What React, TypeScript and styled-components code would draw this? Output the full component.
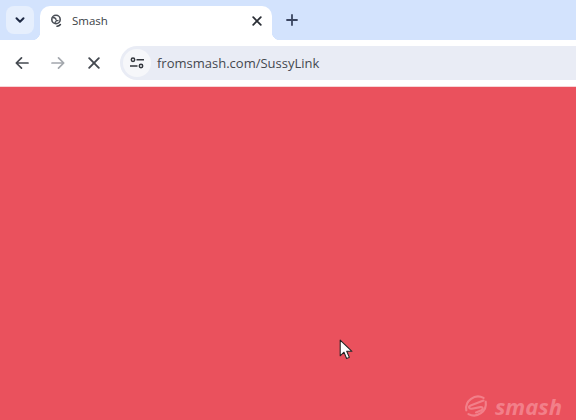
import React from "react";
import styled, { createGlobalStyle } from "styled-components";

const Global = createGlobalStyle`
  html, body { margin: 0; padding: 0; width: 576px; height: 420px; overflow: hidden; }
  #root { width: 576px; height: 420px; }
`;

const Page = styled.div`
  width: 576px;
  height: 420px;
  display: flex;
  flex-direction: column;
  font-family: "Open Sans", "Noto Sans", sans-serif;
  background: #ea515d;
`;

const TabStrip = styled.div`
  height: 40px;
  flex: none;
  background: #d3e3fd;
  display: flex;
  align-items: flex-start;
  padding: 6px 0 0 6px;
  box-sizing: border-box;
`;

const TabSearch = styled.div`
  width: 28px;
  height: 28px;
  border-radius: 8px;
  background: #e6effd;
  display: flex;
  align-items: center;
  justify-content: center;
  color: #1f2a44;
  flex: none;
`;

const Tab = styled.div`
  position: relative;
  width: 232px;
  height: 34px;
  margin-left: 6px;
  background: #fff;
  border-radius: 10px 10px 0 0;
  display: flex;
  align-items: center;
  padding: 0 9px 5px 9px;
  box-sizing: border-box;
  flex: none;
  &::before, &::after {
    content: "";
    position: absolute;
    bottom: 0;
    width: 8px;
    height: 8px;
  }
  &::before { left: -8px; background: radial-gradient(circle at 0 0, transparent 8px, #fff 8.5px); }
  &::after { right: -8px; background: radial-gradient(circle at 100% 0, transparent 8px, #fff 8.5px); }
`;

const TabTitle = styled.span`
  margin-left: 7px;
  font-size: 11.5px;
  color: #3a3e45;
  flex: 1;
`;

const NewTab = styled.div`
  margin-left: 6px;
  width: 28px;
  height: 28px;
  display: flex;
  align-items: center;
  justify-content: center;
  color: #3a4560;
`;

const Toolbar = styled.div`
  height: 47px;
  flex: none;
  background: #fff;
  display: flex;
  align-items: flex-start;
  padding: 6px 0 0 0;
  box-sizing: border-box;
  border-bottom: 1px solid #f7d5d8;
`;

const NavButton = styled.div<{ $muted?: boolean }>`
  width: 36px;
  height: 33px;
  display: flex;
  align-items: center;
  justify-content: center;
  flex: none;
  color: ${(p) => (p.$muted ? "#a3a7ad" : "#444950")};
`;

const NavGroup = styled.div`
  display: flex;
  padding-left: 4px;
`;

const Omnibox = styled.div`
  flex: 1;
  height: 34px;
  margin-left: 8px;
  background: #e9ecf5;
  border-radius: 17px 0 0 17px;
  display: flex;
  align-items: center;
  padding-left: 3px;
`;

const SiteInfo = styled.div`
  width: 28px;
  height: 28px;
  border-radius: 50%;
  background: #f6f7fa;
  display: flex;
  align-items: center;
  justify-content: center;
  color: #33373d;
  flex: none;
`;

const Url = styled.span`
  margin: 0 0 1px 6px;
  font-size: 13px;
  color: #44484f;
`;

const Content = styled.div`
  position: relative;
  flex: 1;
`;

const Cursor = styled.svg`
  position: absolute;
  left: 339px;
  top: 252px;
`;

const Watermark = styled.div`
  position: absolute;
  right: 14px;
  bottom: 0;
  display: flex;
  align-items: center;
  gap: 5px;
  color: #f27f89;
`;

const WatermarkText = styled.span`
  font-weight: 700;
  font-style: italic;
  font-size: 22px;
  line-height: 26px;
`;

export default function App() {
  return (
    <Page>
      <Global />
      <TabStrip>
        <TabSearch>
          <svg width="12" height="12" viewBox="0 0 12 12" fill="none" stroke="currentColor" strokeWidth="2" strokeLinecap="round" strokeLinejoin="round">
            <path d="M2.5 4.2 6 7.7l3.5-3.5" />
          </svg>
        </TabSearch>
        <Tab>
          <svg width="16" height="16" viewBox="0 0 16 16" fill="none">
            <circle cx="7" cy="6.5" r="4.2" stroke="#4a4f57" strokeWidth="1.6" />
            <path d="M4 4.5c2 .2 3 1 3 2.2s1.5 1 2.5.6M6 10c0-1 .5-1.5 1.5-1.5" stroke="#4a4f57" strokeWidth="1.3" />
            <path d="M8 13.2c1.4 0 2.6-.6 3.4-1.6" stroke="#3a3f47" strokeWidth="1.6" strokeLinecap="round" />
          </svg>
          <TabTitle>Smash</TabTitle>
          <svg width="12" height="12" viewBox="0 0 12 12" fill="none" stroke="#2a2e35" strokeWidth="1.8" strokeLinecap="round">
            <path d="M2.2 2.2l7.6 7.6M9.8 2.2l-7.6 7.6" />
          </svg>
        </Tab>
        <NewTab>
          <svg width="12" height="12" viewBox="0 0 12 12" fill="none" stroke="currentColor" strokeWidth="1.8" strokeLinecap="round">
            <path d="M6 1v10M1 6h10" />
          </svg>
        </NewTab>
      </TabStrip>
      <Toolbar>
        <NavGroup>
          <NavButton>
            <svg width="14" height="14" viewBox="0 0 14 14" fill="none" stroke="currentColor" strokeWidth="1.7" strokeLinecap="round" strokeLinejoin="round">
              <path d="M13 7H1.5M6.5 1.8 1.3 7l5.2 5.2" />
            </svg>
          </NavButton>
          <NavButton $muted>
            <svg width="14" height="14" viewBox="0 0 14 14" fill="none" stroke="currentColor" strokeWidth="1.7" strokeLinecap="round" strokeLinejoin="round">
              <path d="M1 7h11.5M7.5 1.8 12.7 7l-5.2 5.2" />
            </svg>
          </NavButton>
          <NavButton>
            <svg width="12" height="12" viewBox="0 0 12 12" fill="none" stroke="currentColor" strokeWidth="1.9" strokeLinecap="round">
              <path d="M1.2 1.2l9.6 9.6M10.8 1.2l-9.6 9.6" />
            </svg>
          </NavButton>
        </NavGroup>
        <Omnibox>
          <SiteInfo>
            <svg width="14" height="12" viewBox="0 0 14 12" fill="none" stroke="currentColor" strokeWidth="1.5">
              <circle cx="3" cy="2.8" r="1.7" />
              <path d="M6.5 2.8H14M0 9h7.5" />
              <circle cx="11" cy="9" r="1.7" />
            </svg>
          </SiteInfo>
          <Url>fromsmash.com/SussyLink</Url>
        </Omnibox>
      </Toolbar>
      <Content>
        <Cursor width="15" height="21" viewBox="0 0 14 20">
          <path d="M1 1v15l3.6-3.4 2.5 6 2.6-1.1-2.5-5.8h5L1 1z" fill="#fff" stroke="#222" strokeWidth="1" strokeLinejoin="round" />
        </Cursor>
        <Watermark>
          <svg width="28" height="28" viewBox="0 0 26 26" fill="none" stroke="currentColor" strokeWidth="2" strokeLinecap="round">
            <path d="M20 5.5A11 11 0 0 0 4 17" />
            <path d="M6 20.5A11 11 0 0 0 22 9" />
            <path d="M20 8 8 12.5c-2.5 1-1.5 3.5 1 3l8-1.5c2.5-.5 3 2 1 3l-5 2" />
          </svg>
          <WatermarkText>smash</WatermarkText>
        </Watermark>
      </Content>
    </Page>
  );
}
